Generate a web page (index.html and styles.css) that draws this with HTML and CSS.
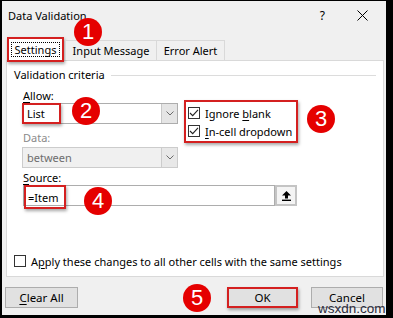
FILE: index.html
```html
<!DOCTYPE html>
<html>
<head>
<meta charset="utf-8">
<link rel="stylesheet" href="styles.css">
</head>
<body>
<div class="dialog">
  <div class="titlebar">
    <span class="title">Data Validation</span>
    <span class="help">?</span>
    <span class="close"><svg width="11" height="11" viewBox="0 0 11 11"><path d="M0.5 0.5L10.5 10.5M10.5 0.5L0.5 10.5" stroke="#000" stroke-width="1"/></svg></span>
  </div>
  <div class="content">
    <div class="tabs">
      <div class="tab active"><span class="focus">Settings</span></div>
      <div class="tab t-input">Input Message</div>
      <div class="tab t-error">Error Alert</div>
    </div>
    <div class="panel">
      <div class="group-title"><span>Validation criteria</span><span class="rule"></span></div>
      <div class="criteria">
        <div class="left">
          <div class="lbl"><u>A</u>llow:</div>
          <div class="select">
            <span class="value hl list">List</span>
            <span class="arrow"><svg width="8" height="5" viewBox="0 0 8 5"><path d="M0.5 0.5L4 4L7.5 0.5" fill="none" stroke="#6b6b6b" stroke-width="1"/></svg></span>
          </div>
          <div class="lbl disabled data-lbl">Data:</div>
          <div class="select dis">
            <span class="value">between</span>
            <span class="arrow"><svg width="8" height="5" viewBox="0 0 8 5"><path d="M0.5 0.5L4 4L7.5 0.5" fill="none" stroke="#6b6b6b" stroke-width="1"/></svg></span>
          </div>
        </div>
        <div class="checks hl">
          <div class="cb-row"><span class="cb"><svg width="10" height="10" viewBox="0 0 10 10"><path d="M1 5L3.7 7.7L9 1.8" fill="none" stroke="#222" stroke-width="1.1"/></svg></span><span>Ignore <u>b</u>lank</span></div>
          <div class="cb-row"><span class="cb"><svg width="10" height="10" viewBox="0 0 10 10"><path d="M1 5L3.7 7.7L9 1.8" fill="none" stroke="#222" stroke-width="1.1"/></svg></span><span><u>I</u>n-cell dropdown</span></div>
        </div>
      </div>
      <div class="lbl src-lbl"><u>S</u>ource:</div>
      <div class="source">
        <div class="input"><span class="value hl item">=Item</span></div>
        <div class="ref-btn"><svg width="9" height="10" viewBox="0 0 9 10"><path d="M4.5 0L9 4.5H6V7.5H3V4.5H0Z" fill="#000"/><rect x="0" y="8.6" width="9" height="1.4" fill="#000"/></svg></div>
      </div>
      <div class="cb-row apply"><span class="cb"></span><span>A<u>p</u>ply these changes to all other cells with the same settings</span></div>
    </div>
    <div class="buttons">
      <button class="btn clear"><u>C</u>lear All</button>
      <div class="right">
        <button class="btn ok">OK</button>
        <button class="btn cancel">Cancel</button>
      </div>
    </div>
  </div>
  <span class="badge b1">1</span>
  <span class="badge b2">2</span>
  <span class="badge b3">3</span>
  <span class="badge b4">4</span>
  <span class="badge b5">5</span>
  <span class="watermark">wsxdn.com</span>
</div>
</body>
</html>
```

FILE: styles.css
```css
* { box-sizing: border-box; }
html, body { margin: 0; padding: 0; }
body {
  width: 393px;
  height: 318px;
  overflow: hidden;
  background: #000;
  font-family: "Noto Sans", "Open Sans", sans-serif;
  font-size: 11px;
  color: #000;
}
u { text-decoration: underline; text-underline-offset: 2px; }
.dialog {
  position: relative;
  margin: 1px 7px 0 2px;
  width: 384px;
  height: 314px;
  background: #f0f0f0;
  display: flex;
  flex-direction: column;
}
.titlebar {
  height: 29px;
  flex: none;
  display: flex;
  align-items: center;
  padding-left: 6px;
  font-size: 11px;
}
.help { margin-left: auto; font-size: 12px; }
.close { display: flex; margin-left: 32px; margin-right: 18px; }
.content {
  padding: 8px 2px 0 4px;
  display: flex;
  flex-direction: column;
}
.tabs {
  display: flex;
  align-items: flex-end;
  height: 22px;
  position: relative;
  z-index: 1;
}
.tab {
  height: 20px;
  border: 1px solid #d9d9d9;
  border-bottom: none;
  display: flex;
  align-items: center;
  justify-content: center;
  background: #f0f0f0;
}
.tab.active {
  height: 25px;
  width: 57px;
  margin-left: 1px;
  margin-bottom: -2px;
  border: 2px solid #d42020;
  background: #fff;
  box-shadow: 1px 2px 3px rgba(0,0,0,0.35);
}
.focus { outline: 1px dotted #000; padding: 0 3px; line-height: 13px; }
.t-input { width: 92px; margin-left: 1px; }
.t-error { width: 69px; margin-left: -1px; }
.panel {
  height: 217px;
  background: #fff;
  border: 1px solid #d9d9d9;
  display: flex;
  flex-direction: column;
  padding: 7px 7px 8px 7px;
}
.group-title {
  display: flex;
  align-items: center;
  height: 14px;
  line-height: 14px;
}
.rule { flex: 1; border-top: 1px solid #dcdcdc; margin-left: 6px; }
.criteria { display: flex; margin-left: 8px; margin-top: 7px; }
.left { width: 156px; display: flex; flex-direction: column; }
.lbl { line-height: 14px; height: 14px; padding-left: 1px; }
.disabled { color: #8a8a8a; }
.data-lbl { margin-top: 7px; }
.select {
  height: 21px;
  border: 1px solid #adadad;
  background: #fff;
  display: flex;
  align-items: center;
}
.select.dis { margin-top: 2px; background: #f0f0f0; border-color: #cccccc; color: #6d6d6d; }
.select .value { flex: 1; padding-left: 4px; line-height: 19px; }
.select .arrow {
  width: 16px;
  height: 19px;
  background: #e5e5e5;
  border-left: 1px solid #c8c8c8;
  display: flex;
  align-items: center;
  justify-content: center;
}
.select.dis .arrow { background: #e8e8e8; border-left-color: #cccccc; }
.hl {
  border: 2px solid #d42020;
  box-shadow: 1px 2px 3px rgba(0,0,0,0.35);
}
.select .value.list {
  flex: none;
  width: 39px;
  height: 21px;
  margin: -1px 0 -1px -1px;
  padding-left: 3px;
  display: flex;
  align-items: center;
}
.select .list + .arrow { margin-left: auto; }
.checks {
  margin-left: 6px;
  margin-top: 11px;
  align-self: flex-start;
  padding: 2px 4px 1px 2px;
}
.cb-row { display: flex; align-items: center; height: 18px; white-space: nowrap; }
.cb {
  width: 12px;
  height: 12px;
  border: 1px solid #333;
  background: #fff;
  margin-right: 5px;
  display: flex;
  align-items: center;
  justify-content: center;
  flex: none;
}
.src-lbl { margin-left: 8px; margin-top: 3px; }
.source { display: flex; margin-left: 9px; height: 21px; }
.input {
  width: 252px;
  height: 21px;
  border: 1px solid #adadad;
  background: #fff;
}
.input .item {
  display: flex;
  align-items: center;
  width: 42px;
  height: 24px;
  margin-top: -1px;
  padding-left: 2px;
}
.ref-btn {
  width: 22px;
  height: 21px;
  border: 2px solid #c4c4c4;
  background: #f4f4f4;
  display: flex;
  align-items: center;
  justify-content: center;
}
.apply { margin-top: auto; height: 14px; }
.buttons {
  display: flex;
  justify-content: space-between;
  margin-top: 10px;
}
.right { display: flex; gap: 13px; margin-right: 1px; }
.btn {
  height: 21px;
  border: 1px solid #adadad;
  background: #e1e1e1;
  font-family: inherit;
  font-size: 11.5px;
  color: #000;
  padding: 0;
}
.clear { width: 73px; margin-left: -1px; }
.ok {
  width: 71px;
  border-color: #0078d7;
  outline: 2px solid #d42020;
  outline-offset: -2px;
  box-shadow: 1px 2px 3px rgba(0,0,0,0.35);
}
.cancel { width: 72px; }
.badge {
  position: absolute;
  width: 28px;
  height: 28px;
  border-radius: 50%;
  background: #e50000;
  color: #fff;
  font-family: "Liberation Sans", Arial, sans-serif;
  font-size: 22px;
  display: flex;
  align-items: center;
  justify-content: center;
  z-index: 5;
}
.b1 { left: 72px; top: 17px; }
.b2 { left: 70px; top: 96px; }
.b3 { left: 305px; top: 104px; }
.b4 { left: 82px; top: 186px; }
.b5 { left: 181px; top: 283px; }
.watermark {
  position: absolute;
  left: 316px;
  top: 301px;
  font-family: "Liberation Sans", Arial, sans-serif;
  font-size: 13.5px;
  line-height: 14px;
  color: #2a2a3a;
  z-index: 6;
}
```
